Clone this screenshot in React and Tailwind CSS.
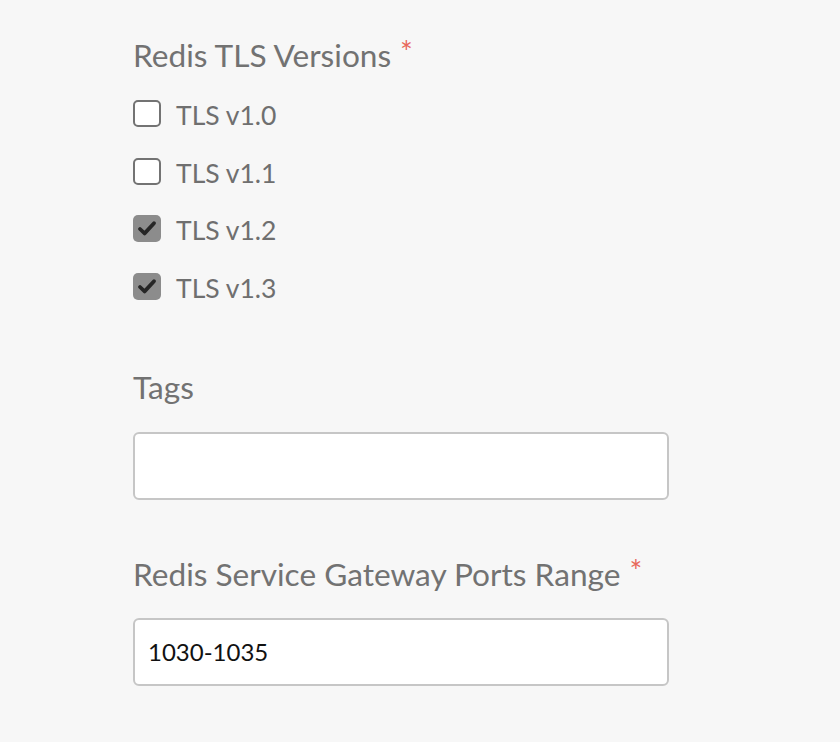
import React from "react";

const versions = [
  { label: "TLS v1.0", checked: false },
  { label: "TLS v1.1", checked: false },
  { label: "TLS v1.2", checked: true },
  { label: "TLS v1.3", checked: true },
];

const Required = () => (
  <span className="ml-[9px] inline-block text-[30px] leading-[20px] text-[#e8685a] align-top relative top-[6px]">*</span>
);

const Checkbox = ({ checked }) =>
  checked ? (
    <span className="w-[28px] h-[27px] rounded-[5px] bg-[#8c8c8c] flex items-center justify-center shrink-0">
      <svg width="20" height="17" viewBox="0 0 20 17" fill="none">
        <path d="M3 9 L7.6 13.4 L17 3.2" stroke="#262626" strokeWidth="3.8" strokeLinecap="round" strokeLinejoin="round" />
      </svg>
    </span>
  ) : (
    <span className="w-[28px] h-[27px] rounded-[5px] border-2 border-[#737373] bg-white shrink-0" />
  );

export default function App() {
  return (
    <div className="min-h-[742px] w-full bg-[#f7f7f7] pl-[133px] pt-[35px] font-['Lato',sans-serif]">
      {/* TLS versions */}
      <div className="text-[31.6px] leading-[40px] text-[#727272]">
        Redis TLS Versions
        <Required />
      </div>
      <div className="mt-[25px] flex flex-col">
        {versions.map((v) => (
          <div key={v.label} className="h-[57.67px] flex items-start">
            <Checkbox checked={v.checked} />
            <span className="ml-[15px] text-[26.5px] leading-[30px] text-[#6f6f6f]">{v.label}</span>
          </div>
        ))}
      </div>

      {/* Tags */}
      <div className="mt-[36px] text-[31.6px] leading-[40px] text-[#727272]">Tags</div>
      <div className="mt-[25px] w-[536px] h-[68px] bg-white border-2 border-[#c6c6c6] rounded-[6px]" />

      {/* Ports */}
      <div className="mt-[54px] text-[31.6px] leading-[40px] text-[#727272]">
        Redis Service Gateway Ports Range
        <Required />
      </div>
      <div className="mt-[24px] w-[536px] h-[68px] bg-white border-2 border-[#c6c6c6] rounded-[6px] flex items-center px-[13px]">
        <span className="text-[24px] text-[#111]">1030-1035</span>
      </div>
    </div>
  );
}
